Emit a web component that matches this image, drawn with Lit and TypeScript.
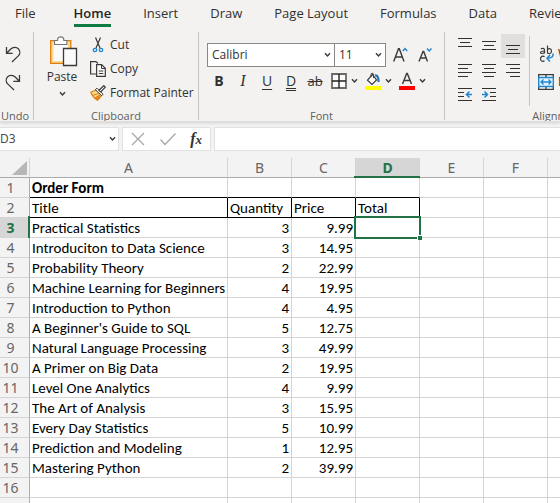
import { LitElement, html, css, svg, nothing } from "lit";
import { customElement, state } from "lit/decorators.js";
import { classMap } from "lit/directives/class-map.js";

const ROWS: string[][] = [
  ["Order Form"],
  ["Title", "Quantity", "Price", "Total"],
  ["Practical Statistics", "3", "9.99"],
  ["Introduciton to Data Science", "3", "14.95"],
  ["Probability Theory", "2", "22.99"],
  ["Machine Learning for Beginners", "4", "19.95"],
  ["Introduction to Python", "4", "4.95"],
  ["A Beginner's Guide to SQL", "5", "12.75"],
  ["Natural Language Processing", "3", "49.99"],
  ["A Primer on Big Data", "2", "19.95"],
  ["Level One Analytics", "4", "9.99"],
  ["The Art of Analysis", "3", "15.95"],
  ["Every Day Statistics", "5", "10.99"],
  ["Prediction and Modeling", "1", "12.95"],
  ["Mastering Python", "2", "39.99"],
  [],
  [],
];
const COLUMNS = ["A", "B", "C", "D", "E", "F", "G"];
const TABS = ["File", "Home", "Insert", "Draw", "Page Layout", "Formulas", "Data", "Review"];

const icon = (w: number, h: number, body: unknown) =>
  html`<svg width=${w} height=${h} viewBox="0 0 ${w} ${h}" fill="none" stroke="#3b3a39" aria-hidden="true">${body}</svg>`;

const chevron = icon(7, 6, svg`<path d="M1 1.2L3.5 4L6 1.2" stroke-width="1.4"/>`);
const undoIcon = icon(16, 17, svg`<path d="M1.5 1v6.3h6.2M1.7 7.2L5.5 3.2C8 .9 11.500 .7 13.300 2.700C15.400 4.900 15.200 7.900 13.300 9.900L7 16" stroke-width="1.3"/>`);
const redoIcon = icon(16, 17, svg`<path d="M14.500 1v6.300h-6.200M14.300 7.200L10.500 3.200C8 .9 4.500 .7 2.700 2.700C.6 4.900 .8 7.900 2.700 9.900L9 16" stroke-width="1.3"/>`);
const pasteIcon = icon(28, 31, svg`
  <path d="M.7 4.700h20.100v22.600H.7z" fill="#fbdc8e" stroke="#e07d10" stroke-width="1.300"/>
  <path d="M3.500 6h14.500v19h-14.500z" fill="#fafafa" stroke="none"/>
  <path d="M4.500 8.500V4.500h3C7.500 2 8.800 .8 10.700 .8s3.200 1.200 3.200 3.700h3v4z" fill="#fff" stroke="#797774" stroke-width="1.200"/>
  <path d="M13.500 12.500h13v17h-13z" fill="#fafafa" stroke-width="1.300"/>`);
const cutIcon = icon(16, 16, svg`
  <path d="M5.500 .5L10 11M10.500 .5L6 11" stroke-width="1.200"/>
  <circle cx="5" cy="13" r="1.700" stroke="#1e86d0" stroke-width="1.300"/>
  <circle cx="11" cy="13" r="1.700" stroke="#1e86d0" stroke-width="1.300"/>`);
const copyIcon = icon(16, 16, svg`
  <path d="M6.500 13H.6V.6H6L8 2.500" stroke-width="1.200"/>
  <path d="M6.600 3.600h5l3.700 3.700v8H6.600z" fill="#fafafa" stroke-width="1.200"/>
  <path d="M11.500 3.800v3.700h3.700M8.800 10h4.500M8.800 12.500h4.500"/>`);
const brushIcon = icon(16, 16, svg`
  <path d="M6 5L.8 7.300C2 10.500 4.500 13.500 7.500 15.200L12 10z" fill="#fbdc8e" stroke="#e07d10" stroke-width="1.200"/>
  <path d="M3 10.200l5.500-1.500M5.300 12.700l4.500-2.700L7.500 15z" fill="#ed8b22" stroke="#e07d10"/>
  <path d="M5.300 4.700l1.700-1.500 6 6-1.300 1.500z" fill="#fff"/>
  <path d="M9 5.200L13.800 .7l1.500 1.500L10.800 7z" fill="#fff" stroke-width="1.200"/>`);
const growIcon = icon(18, 18, svg`
  <path d="M1.700 15.500L6.500 2.800h.8L12 15.500M3.300 11h7.200" stroke-width="1.400"/>
  <path d="M10.800 5L13 2.500L15.200 5" stroke="#1e86d0" stroke-width="1.400"/>`);
const shrinkIcon = icon(18, 18, svg`
  <path d="M3 15.500L7 5.500h.7L11.500 15.500M4.500 12h6" stroke-width="1.400"/>
  <path d="M11 2.500L13.200 5L15.500 2.500" stroke="#1e86d0" stroke-width="1.400"/>`);
const bordersIcon = icon(16, 16, svg`
  <path d="M1 1h14v14H1z" stroke="#6b6967" stroke-width="1.800" fill="#fafafa"/>
  <path d="M8 1v14M1 8h14" stroke="#222" stroke-width="1.400"/>`);
const fillIcon = icon(16, 18, svg`
  <path d="M2.500 8.200L7.500 2.500L11.500 8L7 12.500z" stroke-width="1.200" fill="#fafafa"/>
  <path d="M6 5V2.500c0-1.700 2.500-1.700 2.500 0V6" />
  <path d="M10 3.500c2.500-.5 3.700 2.500 3.500 6.500" stroke="#1e76b8" stroke-width="2.200"/>
  <path d="M0 14h16v4H0z" fill="#ff0" stroke="none"/>`);
const colorIcon = icon(16, 18, svg`
  <path d="M3.500 12L7.700 1.500h.6L12.500 12M5 8.500h6" stroke-width="1.400"/>
  <path d="M0 14h16v4H0z" fill="#f00" stroke="none"/>`);
const lines = (d: string, extra: unknown = nothing) =>
  icon(24, 24, svg`<path d=${d} stroke="#323130"/>${extra}`);
const ALIGN = [
  { name: "Top Align", art: lines("M5 4.500h14M7 8.500h10M5 12.500h14") },
  { name: "Middle Align", art: lines("M5 7.500h14M7 11.500h10M5 15.500h14") },
  { name: "Bottom Align", art: lines("M5 11.500h14M7 15.500h10M5 19.500h14"), on: true },
  { name: "Align Left", art: lines("M5 6.500h14M5 10.500h10M5 14.500h14M5 18.500h10") },
  { name: "Center", art: lines("M5 6.500h14M7 10.500h10M5 14.500h14M7 18.500h10") },
  { name: "Align Right", art: lines("M5 6.500h14M9 10.500h10M5 14.500h14M9 18.500h10") },
  { name: "Decrease Indent", art: lines("M5 6.500h14M5 10.500h6M5 14.500h6M5 18.500h14", svg`<path d="M19 12.500h-5M16.500 9.500l-3 3 3 3" stroke="#1e86d0" stroke-width="1.500"/>`) },
  { name: "Increase Indent", art: lines("M5 6.500h14M13 10.500h6M13 14.500h6M5 18.500h14", svg`<path d="M5 12.500h5M7.500 9.500l3 3-3 3" stroke="#1e86d0" stroke-width="1.500"/>`) },
];
const wrapIcon = icon(16, 18, svg`
  <g stroke-width="1.200"><path d="M3 4c1-1 3.500-.8 3.500 1v3.500M6.500 6C4 6 2.500 6.300 2.500 7.500S5 9 6.500 7.300"/>
  <path d="M9.500 .5v8M9.500 5c.5-2 4-2 4 1.200s-3.500 3-4 1.200"/>
  <path d="M6.500 11.700c-1.500-1.200-4-.4-4 2.100s2.500 3.200 4 2"/></g>
  <path d="M15 8.500c.5 3-1 4.700-6 4.700M12 10l-3 3.200 3 3.200" stroke="#1e86d0" stroke-width="1.500"/>`);
const mergeIcon = icon(16, 16, svg`
  <path d="M.7 .7h14.600v14.600H.7zM8 1v2.500M8 12.500V15" fill="#fafafa" stroke-width="1.300"/>
  <path d="M.7 3.500h14.600v9H.7z" fill="#e6f2fb" stroke="#1e86d0" stroke-width="1.400"/>
  <path d="M3 8h10M5.500 5.500L3 8l2.500 2.500M10.500 5.500L13 8l-2.500 2.500" stroke="#1e86d0" stroke-width="1.300"/>`);
const cancelIcon = icon(16, 16, svg`<path d="M2 2l12 12M14 2L2 14" stroke="#a6a6a6" stroke-width="1.200"/>`);
const acceptIcon = icon(18, 16, svg`<path d="M1.500 8.500L6 13.500L16.500 2.500" stroke="#a6a6a6" stroke-width="1.200"/>`);

@customElement("excel-ribbon")
export class ExcelRibbon extends LitElement {
  @state() private tab = "Home";

  static styles = css`
    :host { display: block; background: #f3f2f1; color: #323130; font: 12px/16px "Open Sans", sans-serif; border-bottom: 1px solid #e1dfdd; box-shadow: 0 1px 3px #00000026; overflow: hidden; }
    button, select { font: inherit; color: inherit; background: none; border: 0; padding: 0; margin: 0; border-radius: 0; }
    button { display: flex; align-items: center; justify-content: center; flex: none; }
    svg { display: block; flex: none; }
    .tabs { display: flex; gap: 32px; height: 27px; padding-left: 15px; font-size: 13px; }
    .tab { white-space: nowrap; align-items: stretch; line-height: 26px; }
    .tab:first-child { margin-right: 6px; }
    .tab.active { font-weight: 600; color: #252423; box-shadow: inset 0 -3px #107c41; }
    .groups { display: flex; padding-top: 5px; height: 89px; }
    .group { display: flex; flex-direction: column; justify-content: space-between; flex: none; border-right: 1px solid #c8c6c4; box-sizing: border-box; height: 88px; }
    .caption { text-align: center; font-size: 11px; line-height: 8px; color: #605e5c; }
    .undo { width: 34px; }
    .undo .caption { text-align: left; padding-left: 1px; }
    .stack { display: flex; flex-direction: column; align-items: flex-start; gap: 11px; padding: 14px 0 0 5px; }
    .clipboard { width: 165px; }
    .body { display: flex; }
    .paste { flex-direction: column; width: 56px; padding-top: 4px; justify-content: flex-start; }
    .paste svg:first-child { margin-left: 4px; }
    .paste-label { line-height: 20px; padding-bottom: 4px; }
    .commands { display: flex; flex-direction: column; align-items: flex-start; padding-top: 1px; }
    .command { height: 24px; gap: 4px; white-space: nowrap; }
    .font { width: 246px; }
    .row { display: flex; align-items: center; padding-left: 8px; }
    .pickers { padding-top: 11px; }
    .picker { display: grid; align-items: center; }
    .picker select, .picker svg { grid-area: 1 / 1; }
    .picker svg { justify-self: end; margin-right: 4px; pointer-events: none; }
    .picker select { appearance: none; box-sizing: border-box; height: 24px; border: 1px solid #8a8886; background: #fff; padding-left: 4px; }
    .face select { width: 128px; }
    .size select { width: 51px; border-left: 0; }
    .step { width: 24px; height: 24px; }
    .step:first-of-type { margin-left: 3px; }
    .tools { padding-bottom: 18px; }
    .tool { width: 24px; height: 24px; font-size: 14px; }
    .bold { font-weight: 700; }
    .italic { font-family: "Liberation Serif", serif; font-style: italic; font-size: 16px; }
    .under { text-decoration: underline; text-underline-offset: 3px; }
    .double { text-decoration: underline double; text-underline-offset: 2px; }
    .strike { text-decoration: line-through; font-size: 13px; }
    .drop { width: 10px; height: 24px; justify-content: flex-start; }
    .alignment { width: 228px; }
    .grid { display: grid; grid-template-columns: repeat(3, 24px); grid-auto-rows: 24px; margin: 2px 4px 0 8px; }
    .on { background: #e1dfdd; }
    .wide { border-left: 1px solid #c8c6c4; margin-top: 4px; height: 70px; padding: 6px 0 0 8px; display: flex; flex-direction: column; align-items: flex-start; gap: 4px; box-sizing: border-box; }
  `;

  render() {
    return html`
      <nav class="tabs">
        ${TABS.map((t) => html`<button class=${classMap({ tab: true, active: t === this.tab })} @click=${() => (this.tab = t)}>${t}</button>`)}
      </nav>
      <div class="groups">
        <section class="group undo">
          <div class="stack">
            <button aria-label="Undo">${undoIcon}</button>
            <button aria-label="Redo">${redoIcon}</button>
          </div>
          <div class="caption">Undo</div>
        </section>
        <section class="group clipboard">
          <div class="body">
            <button class="paste">${pasteIcon}<span class="paste-label">Paste</span>${chevron}</button>
            <div class="commands">
              <button class="command">${cutIcon}Cut</button>
              <button class="command">${copyIcon}Copy</button>
              <button class="command">${brushIcon}Format Painter</button>
            </div>
          </div>
          <div class="caption">Clipboard</div>
        </section>
        <section class="group font">
          <div class="row pickers">
            <label class="picker face"><select aria-label="Font"><option>Calibri</option></select>${chevron}</label>
            <label class="picker size"><select aria-label="Font size"><option>11</option></select>${chevron}</label>
            <button class="step" aria-label="Increase font size">${growIcon}</button>
            <button class="step" aria-label="Decrease font size">${shrinkIcon}</button>
          </div>
          <div class="row tools">
            <button class="tool bold">B</button>
            <button class="tool italic">I</button>
            <button class="tool under">U</button>
            <button class="tool double">D</button>
            <button class="tool strike">ab</button>
            <button class="tool" aria-label="Borders">${bordersIcon}</button>
            <button class="drop" aria-label="Border options">${chevron}</button>
            <button class="tool" aria-label="Fill color">${fillIcon}</button>
            <button class="drop" aria-label="Fill options">${chevron}</button>
            <button class="tool" aria-label="Font color">${colorIcon}</button>
            <button class="drop" aria-label="Font color options">${chevron}</button>
          </div>
          <div class="caption">Font</div>
        </section>
        <section class="group alignment">
          <div class="body">
            <div class="grid">
              ${ALIGN.map((a) => html`<button class=${classMap({ on: !!a.on })} aria-label=${a.name}>${a.art}</button>`)}
            </div>
            <div class="wide">
              <button class="command">${wrapIcon}Wrap Text</button>
              <button class="command">${mergeIcon}Merge &amp; Center</button>
            </div>
          </div>
          <div class="caption">Alignment</div>
        </section>
      </div>`;
  }
}

@customElement("formula-bar")
export class FormulaBar extends LitElement {
  static styles = css`
    :host { display: flex; gap: 3px; padding: 5px 0 7px; background: #f3f3f3; }
    .box { display: flex; align-items: center; height: 24px; box-sizing: border-box; background: #fff; border: 1px solid #e1e1e1; }
    .name { width: 119px; border-left: 0; padding-right: 2px; }
    .actions { width: 89px; justify-content: space-between; padding: 0 8px 0 7px; }
    .formula { flex: 1; border-right: 0; }
    input { border: 0; outline: 0; background: none; min-width: 0; flex: 1; padding: 0; color: #444; font: 12px/16px "Open Sans", sans-serif; }
    button { border: 0; background: none; padding: 0; display: flex; color: #333; }
    .fx { font: italic bold 16px/16px "Liberation Serif", serif; }
    .sub { font-size: 13px; }
    svg { display: block; }
  `;
  render() {
    return html`
      <div class="box name"><input aria-label="Name box" value="D3"><button aria-label="Named ranges">${chevron}</button></div>
      <div class="box actions">
        <button aria-label="Cancel">${cancelIcon}</button>
        <button aria-label="Enter">${acceptIcon}</button>
        <button class="fx" aria-label="Insert function"><span>f<span class="sub">x</span></span></button>
      </div>
      <div class="box formula"><input aria-label="Formula"></div>`;
  }
}

@customElement("sheet-grid")
export class SheetGrid extends LitElement {
  static styles = css`
    :host { display: block; overflow: hidden; background: #fff; }
    table { table-layout: fixed; width: 612px; border-collapse: separate; border-spacing: 0; font: 15px/18px Carlito, Lato, sans-serif; color: #000; }
    .col-head { width: 30px; }
    .col-first { width: 198px; }
    .col { width: 64px; }
    th, td { box-sizing: border-box; height: 20px; padding: 0; border: 0 solid #d4d4d4; border-width: 0 1px 1px 0; position: relative; white-space: nowrap; }
    td { padding: 1px 2px 0; text-align: left; }
    td.num { text-align: right; }
    th { background: #f3f3f3; color: #666; font: 14px/18px "Noto Sans", sans-serif; }
    thead th { height: 20px; border-bottom-color: #ababab; }
    tbody th { text-align: center; border-right-color: #ababab; padding-right: 8px; }
    th.picked { background: #d6d6d6; color: #217346; font-weight: 700; }
    thead .picked::after { content: ""; position: absolute; left: -2px; right: -2px; bottom: -1px; height: 2px; background: #217346; }
    tbody .picked::after { content: ""; position: absolute; top: -2px; bottom: -2px; right: -1px; width: 2px; background: #217346; }
    .corner svg { display: block; margin-left: 12px; }
    .title { font-weight: 700; }
    .line-b { border-bottom-color: #000; }
    .line-r { border-right-color: #000; }
    .selection { position: absolute; inset: -2px; border: 2px solid #217346; z-index: 1; }
    .handle { position: absolute; right: -3px; bottom: -3px; width: 4px; height: 4px; background: #217346; border: solid #fff; border-width: 1px 0 0 1px; }
  `;

  private cell(r: number, c: number) {
    const text = ROWS[r][c] ?? "";
    const cls = {
      title: r === 0 && c === 0,
      num: r > 1 && c > 0,
      "line-b": r < 2 && c < 4,
      "line-r": r === 1 && c < 4,
    };
    return html`<td class=${classMap(cls)}>${text}${r === 2 && c === 3
      ? html`<div class="selection"><div class="handle"></div></div>` : nothing}</td>`;
  }

  render() {
    return html`<table>
      <colgroup><col class="col-head"><col class="col-first">${COLUMNS.slice(1).map(() => html`<col class="col">`)}</colgroup>
      <thead><tr>
        <th class="corner" aria-label="Select all">${icon(16, 16, svg`<path d="M15 1v14H0z" fill="#b7b7b7" stroke="none"/>`)}</th>
        ${COLUMNS.map((c) => html`<th scope="col" class=${classMap({ picked: c === "D" })}>${c}</th>`)}
      </tr></thead>
      <tbody>${ROWS.map((_, r) => html`<tr>
        <th scope="row" class=${classMap({ picked: r === 2 })}>${r + 1}</th>
        ${COLUMNS.map((__, c) => this.cell(r, c))}
      </tr>`)}</tbody>
    </table>`;
  }
}

@customElement("app-root")
export class AppRoot extends LitElement {
  static styles = css`
    :host { display: flex; flex-direction: column; height: 100vh; overflow: hidden; background: #fff; }
    excel-ribbon { flex: none; z-index: 1; }
    formula-bar { flex: none; }
    sheet-grid { flex: 1; min-height: 0; }
  `;
  render() {
    return html`<excel-ribbon></excel-ribbon><formula-bar></formula-bar><sheet-grid></sheet-grid>`;
  }
}
